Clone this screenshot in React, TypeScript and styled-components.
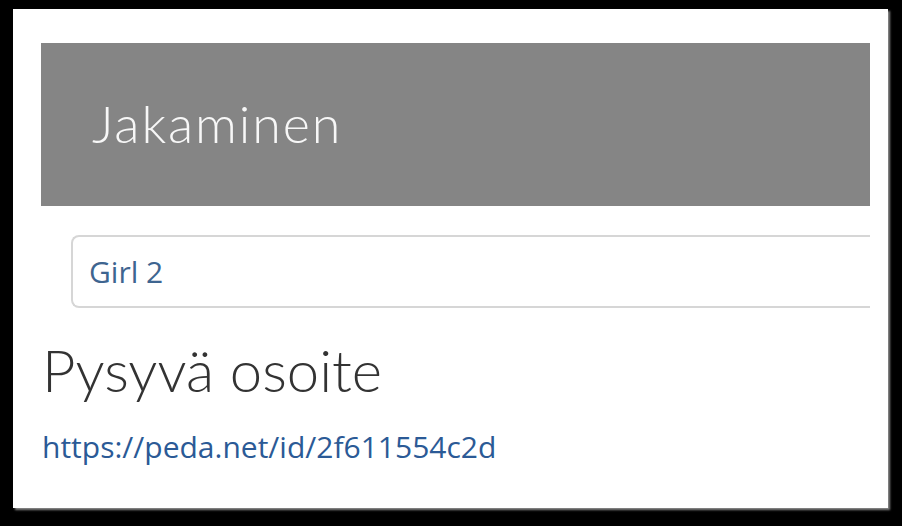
import styled, { createGlobalStyle } from "styled-components";

const GlobalStyle = createGlobalStyle`
  html, body {
    margin: 0;
    padding: 0;
    background: #000000;
  }
  body {
    width: 902px;
    height: 526px;
    overflow: hidden;
  }
`;

const Panel = styled.div`
  margin: 9px 0 0 13px;
  width: 875px;
  height: 499px;
  box-sizing: border-box;
  background: #ffffff;
  box-shadow: 2px 2px 2px rgba(150, 150, 150, 0.9);
  padding: 34px 0 0 28px;
`;

const Content = styled.div`
  width: 829px;
  display: flex;
  flex-direction: column;
`;

const Header = styled.div`
  height: 163px;
  background: #858585;
  display: flex;
  align-items: center;
  padding-left: 51px;
`;

const Title = styled.h1`
  margin: -4px 0 0;
  font-family: Lato, "Open Sans", sans-serif;
  font-weight: 300;
  font-size: 52px;
  letter-spacing: 1.9px;
  line-height: 1;
  color: #f7f7f7;
`;

// the field runs on past the panel's edge in the picture, so no right border
const NameInput = styled.input`
  margin: 29px 0 0 30px;
  width: 799px;
  height: 73px;
  box-sizing: border-box;
  border: 2px solid #d6d6d6;
  border-right: none;
  border-radius: 8px 0 0 8px;
  padding: 0 16px;
  font-family: "Open Sans", sans-serif;
  font-size: 30px;
  color: #3e6590;
  background: #ffffff;
  outline: none;
`;

const SectionTitle = styled.h2`
  margin: 33px 0 0 1px;
  font-family: Lato, "Open Sans", sans-serif;
  font-weight: 300;
  font-size: 58px;
  line-height: 1;
  color: #333333;
`;

const Permalink = styled.a`
  margin: 30px 0 0 1px;
  font-family: "Open Sans", sans-serif;
  font-size: 30px;
  line-height: 1.2;
  color: #2b5a96;
  text-decoration: none;
  align-self: flex-start;
`;

export default function App() {
  return (
    <>
      <GlobalStyle />
      <Panel>
        <Content>
          <Header>
            <Title>Jakaminen</Title>
          </Header>
          <NameInput defaultValue="Girl 2" readOnly />
          <SectionTitle>Pysyvä osoite</SectionTitle>
          <Permalink href="#">https://peda.net/id/2f611554c2d</Permalink>
        </Content>
      </Panel>
    </>
  );
}
